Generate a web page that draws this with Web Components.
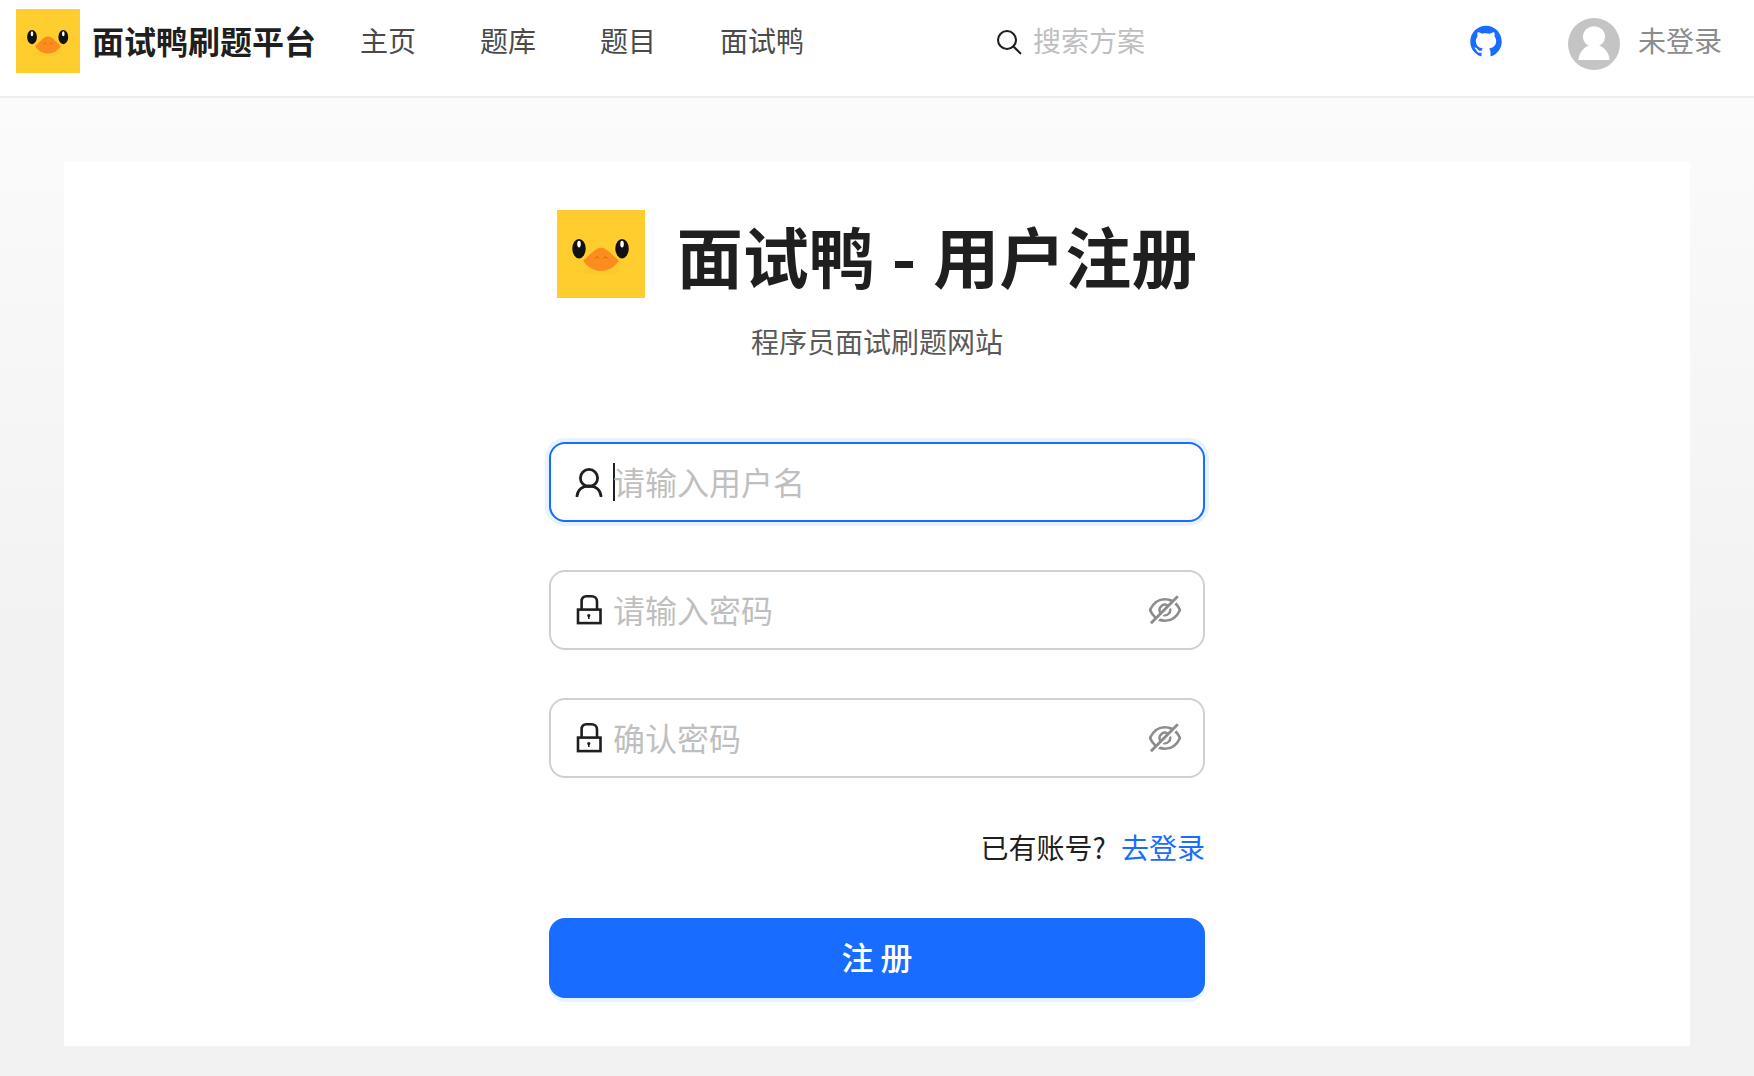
<!DOCTYPE html>
<html lang="zh-CN">
<head>
<meta charset="utf-8">
<title>面试鸭 - 用户注册</title>
<style>
  html, body { margin: 0; height: 100%; }
  body {
    font-family: "Noto Sans CJK SC", "Liberation Sans", sans-serif;
    color: #1f1f1f;
    background: #fff;
    --primary: #186cff;
  }
</style>
</head>
<body>
<app-page>
  <app-header slot="header">
    <nav-link>主页</nav-link>
    <nav-link>题库</nav-link>
    <nav-link>题目</nav-link>
    <nav-link>面试鸭</nav-link>
  </app-header>
  <register-card>
    <text-field icon="user" placeholder="请输入用户名" focused></text-field>
    <text-field icon="lock" placeholder="请输入密码" eye></text-field>
    <text-field icon="lock" placeholder="确认密码" eye></text-field>
    <login-hint>已有账号? <a slot="link">去登录</a></login-hint>
    <primary-button>注 册</primary-button>
  </register-card>
</app-page>

<script>
  const ICONS = {
    user: `<svg width="28" height="30" viewBox="0 0 28 30" fill="none" stroke="#1f1f1f" stroke-width="2.8" stroke-linecap="round">
        <circle cx="14" cy="11" r="8.6"/>
        <path d="M2 29c.6-6.400 5.600-10 12-10s11.400 3.600 12 10"/>
      </svg>`,
    lock: `<svg width="28" height="30" viewBox="0 0 28 30" fill="none" stroke="#1f1f1f" stroke-width="2.6">
        <path d="M6.600 14V6.500C6.600 3.300 8.300 1.300 11.500 1.300h5C19.700 1.300 22 3.300 22 6.500V14"/>
        <rect x="3" y="14.600" width="22.500" height="13.500"/>
        <circle cx="13.800" cy="20.600" r="1.600" fill="#1f1f1f" stroke="none"/>
        <path d="M13.800 20.600v3.400" stroke-width="1.500"/>
      </svg>`,
    eye: `<svg width="38" height="38" viewBox="0 0 1024 1024" fill="#8c8c8c">
        <path d="M942.2 486.2Q889.47 375.11 816.7 305l-50.88 50.88C807.31 395.53 843.45 447.4 874.7 512 791.5 684.2 673.4 766 512 766q-72.67 0-133.87-22.38L323 798.75Q408 838 512 838q288.3 0 430.2-300.3a60.29 60.29 0 000-51.5zm-63.57-320.64L836 122.88a8 8 0 00-11.32 0L715.31 232.2Q624.86 186 512 186q-288.3 0-430.2 300.3a60.3 60.3 0 000 51.5q56.69 119.4 136.5 191.41L112.48 835a8 8 0 000 11.31L155.17 889a8 8 0 0011.31 0l712.15-712.12a8 8 0 000-11.32zM149.3 512C232.6 339.8 350.7 258 512 258c54.54 0 104.13 9.36 149.12 28.39l-70.3 70.3a176 176 0 00-238.13 238.13l-83.42 83.42C223.1 637.49 183.3 582.28 149.3 512zm246.7 0a112.11 112.11 0 01146.2-106.69L401.31 546.2A112 112 0 01396 512z"/>
        <path d="M508 624c-3.460 0-6.870-.16-10.250-.47l-52.820 52.820a176.090 176.090 0 00227.420-227.420l-52.820 52.820c.31 3.380.47 6.790.47 10.250a111.940 111.940 0 01-112 112z"/>
      </svg>`,
    github: `<svg width="36" height="36" viewBox="0 0 1024 1024" fill="#186cff">
        <path d="M511.6 76.3C264.3 76.2 64 276.4 64 523.5 64 718.9 189.3 885 363.8 946c23.5 5.9 19.9-10.8 19.9-22.2v-77.5c-135.7 15.9-141.2-73.9-150.3-88.9C215 726 171.5 718 184.5 703c30.9-15.9 62.4 4 98.9 57.9 26.4 39.1 77.9 32.5 104 26 5.7-23.5 17.9-44.5 34.7-60.8-140.6-25.2-199.2-111-199.2-213 0-49.5 16.3-95 48.3-131.7-20.4-60.5 1.9-112.3 4.9-120 58.1-5.2 118.5 41.6 123.2 45.3 33-8.9 70.7-13.6 112.9-13.6 42.4 0 80.2 4.9 113.5 13.9 11.3-8.6 67.3-48.8 121.3-43.9 2.9 7.7 24.7 58.3 5.5 118 32.4 36.8 48.9 82.7 48.9 132.3 0 102.2-59 188.1-200 212.9a127.5 127.5 0 0138.1 91v112.5c.8 9 0 17.9 15 17.9 177.1-59.7 304.6-227 304.6-424.1 0-247.2-200.4-447.3-447.5-447.3z"/>
      </svg>`,
    search: `<svg width="26" height="26" viewBox="0 0 26 26" fill="none" stroke="#1f1f1f" stroke-width="2.100" stroke-linecap="round">
        <circle cx="11" cy="11" r="9"/>
        <path d="M17.500 17.500l6.800 6.800"/>
      </svg>`
  }

  class BaseElement extends HTMLElement {
    constructor() {
      super()
      this.attachShadow({ mode: 'open' })
    }
    connectedCallback() {
      this.render()
    }
  }

  class AppPage extends BaseElement {
    render() {
      this.shadowRoot.innerHTML = `
        <style>
          :host { display: flex; flex-direction: column; min-height: 1076px; box-sizing: border-box; }
          main {
            flex: 1;
            padding: 64px 64px 30px;
            background: linear-gradient(#fbfbfb, #f2f2f2 55%);
          }
        </style>
        <slot name="header"></slot>
        <main><slot></slot></main>
      `
    }
  }

  class DuckLogo extends BaseElement {
    render() {
      const size = this.getAttribute('size') || 64
      this.shadowRoot.innerHTML = `
        <style>:host { display: block; flex: none; } svg { display: block; }</style>
        <svg width="${size}" height="${size}" viewBox="0 0 64 64">
          <rect width="64" height="64" fill="#ffce2e"/>
          <ellipse cx="32" cy="44.500" rx="14" ry="2.600" fill="#f8ca2e"/>
          <ellipse cx="16" cy="28.100" rx="4.900" ry="7.100" fill="#111"/>
          <ellipse cx="47.300" cy="28.100" rx="4.900" ry="7.100" fill="#111"/>
          <ellipse cx="16" cy="24.800" rx="1.300" ry="2.500" fill="#fff"/>
          <ellipse cx="47.300" cy="24.800" rx="1.300" ry="2.500" fill="#fff"/>
          <path d="M32 27.400c2.500 0 4.500 1.500 6.500 3.500l6 5.500c.4.4.3.9 0 1.300C41.500 41.800 37 44.400 32 44.400s-9.500-2.600-12.500-6.700c-.3-.4-.4-.9 0-1.300l6-5.500c2-2 4-3.500 6.500-3.500z" fill="#fb8c1d"/>
          <path d="M27.500 35.200l1.800-1.200 1.300 1.200M33.800 35.200l1.400-1.200 1.700 1.200" fill="none" stroke="#c9651a" stroke-width=".7"/>
        </svg>
      `
    }
  }

  class NavLink extends BaseElement {
    render() {
      this.shadowRoot.innerHTML = `
        <style>:host { display: block; font-size: 28px; line-height: 42px; padding-bottom: 2px; color: #4a4a4a; }</style>
        <slot></slot>
      `
    }
  }

  class AppHeader extends BaseElement {
    render() {
      this.shadowRoot.innerHTML = `
        <style>
          :host {
            display: flex;
            align-items: center;
            height: 98px;
            box-sizing: border-box;
            padding: 0 32px 14px 16px;
            background: #fff;
            border-bottom: 2px solid #eeeeee;
          }
          .brand { display: flex; align-items: center; gap: 12px; width: 344px; }
          .title { font-size: 32px; font-weight: 700; line-height: 48px; padding-bottom: 2px; white-space: nowrap; color: #1f1f1f; }
          nav { display: flex; gap: 64px; width: 636px; }
          .search { display: flex; align-items: center; gap: 11px; width: 472px; font-size: 28px; line-height: 42px; color: #bfbfbf; }
          .search svg { display: block; margin-top: 1px; }
          .search span, .user span { padding-bottom: 2px; }
          .github { width: 100px; height: 36px; }
          .github svg { display: block; }
          .user { display: flex; align-items: center; gap: 18px; font-size: 28px; line-height: 42px; color: #8c8c8c; }
          .avatar { display: block; margin-top: 6px; }
        </style>
        <div class="brand">
          <duck-logo size="64"></duck-logo>
          <div class="title">面试鸭刷题平台</div>
        </div>
        <nav><slot></slot></nav>
        <div class="search">${ICONS.search}<span>搜索方案</span></div>
        <div class="github">${ICONS.github}</div>
        <div class="user">
          <svg class="avatar" width="52" height="52" viewBox="0 0 52 52">
            <circle cx="26" cy="26" r="26" fill="#c4c4c4"/>
            <ellipse cx="26" cy="18.700" rx="11" ry="10.500" fill="#fff"/>
            <path d="M10.500 42c0-7 5-12 10-14.500h11c5 2.500 10 7.500 10 14.500z" fill="#fff"/>
          </svg>
          <span>未登录</span>
        </div>
      `
    }
  }

  class RegisterCard extends BaseElement {
    render() {
      this.shadowRoot.innerHTML = `
        <style>
          :host { display: block; background: #fff; padding: 48px 0; }
          .inner { width: 656px; margin: 0 auto; display: flex; flex-direction: column; }
          .top { display: flex; align-items: center; justify-content: center; gap: 32px; white-space: nowrap; }
          h1 { margin: 0; font-size: 66px; line-height: 88px; font-weight: 700; color: #1f1f1f; word-spacing: 2px; }
          p { margin: 22px 0 0; text-align: center; font-size: 28px; line-height: 42px; color: #595959; }
          .fields { margin-top: 80px; display: flex; flex-direction: column; }
        </style>
        <div class="inner">
          <div class="top">
            <duck-logo size="88"></duck-logo>
            <h1>面试鸭 - 用户注册</h1>
          </div>
          <p>程序员面试刷题网站</p>
          <div class="fields"><slot></slot></div>
        </div>
      `
    }
  }

  class TextField extends BaseElement {
    render() {
      const focused = this.hasAttribute('focused')
      const eye = this.hasAttribute('eye') ? `<span class="eye">${ICONS.eye}</span>` : ''
      const caret = focused ? '<i class="caret"></i>' : ''
      this.shadowRoot.innerHTML = `
        <style>
          :host { display: block; margin-bottom: 48px; }
          .box {
            display: flex;
            align-items: center;
            height: 80px;
            box-sizing: border-box;
            padding: 0 19px 0 24px;
            background: #fff;
            border: 2px solid ${focused ? 'var(--primary)' : '#d0d0d0'};
            border-radius: 16px;
            ${focused ? 'box-shadow: 0 0 0 4px #e6f4ff;' : ''}
          }
          .icon { display: block; height: 30px; width: 28px; margin-right: 10px; }
          .icon svg, .eye svg { display: block; }
          .caret { display: block; width: 2px; height: 38px; margin-right: -2px; background: #1f1f1f; }
          .placeholder { flex: 1; font-size: 32px; line-height: 48px; padding-bottom: 3px; color: #bfbfbf; }
        </style>
        <div class="box">
          <span class="icon">${ICONS[this.getAttribute('icon')]}</span>
          ${caret}
          <span class="placeholder">${this.getAttribute('placeholder')}</span>
          ${eye}
        </div>
      `
    }
  }

  class LoginHint extends BaseElement {
    render() {
      this.shadowRoot.innerHTML = `
        <style>
          :host { display: block; text-align: right; font-size: 28px; line-height: 42px; word-spacing: 9px; color: #1f1f1f; margin: 0 0 50px; }
          ::slotted(a) { color: var(--primary); }
        </style>
        <slot></slot><slot name="link"></slot>
      `
    }
  }

  class PrimaryButton extends BaseElement {
    render() {
      this.shadowRoot.innerHTML = `
        <style>
          :host {
            display: flex;
            align-items: center;
            justify-content: center;
            height: 80px;
            box-sizing: border-box;
            padding-bottom: 4px;
            border-radius: 16px;
            background: var(--primary);
            color: #fff;
            font-size: 32px;
            font-weight: 500;
            box-shadow: 0 4px 0 #e6f4ff;
          }
        </style>
        <slot></slot>
      `
    }
  }

  customElements.define('app-page', AppPage)
  customElements.define('duck-logo', DuckLogo)
  customElements.define('nav-link', NavLink)
  customElements.define('app-header', AppHeader)
  customElements.define('register-card', RegisterCard)
  customElements.define('text-field', TextField)
  customElements.define('login-hint', LoginHint)
  customElements.define('primary-button', PrimaryButton)
</script>
</body>
</html>
